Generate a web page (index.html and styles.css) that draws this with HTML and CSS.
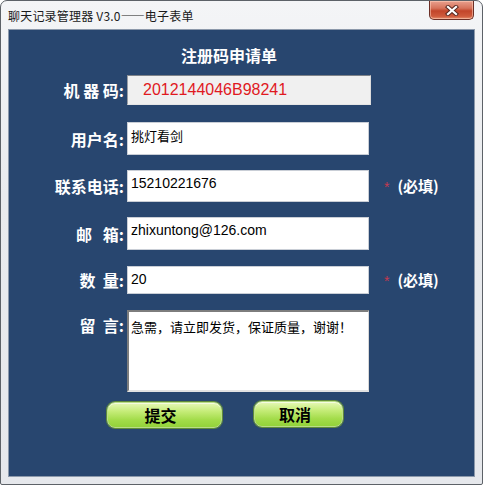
FILE: index.html
```html
<!DOCTYPE html>
<html lang="zh-CN">
<head>
<meta charset="utf-8">
<title>聊天记录管理器 V3.0——电子表单</title>
<link rel="stylesheet" href="styles.css">
</head>
<body>
<div class="window">
  <div class="titlebar">
    <span class="title">聊天记录管理器 V3.0——电子表单</span>
    <div class="close">
      <svg width="14" height="11" viewBox="0 0 14 11">
        <path d="M3 2 L11 9 M11 2 L3 9" stroke="#5a2a22" stroke-width="4.2" stroke-linecap="square" fill="none"/>
        <path d="M3 2 L11 9 M11 2 L3 9" stroke="#ffffff" stroke-width="2.2" stroke-linecap="square" fill="none"/>
      </svg>
    </div>
  </div>
  <div class="panel">
    <div class="heading">注册码申请单</div>

    <div class="row r1">
      <div class="label">机&nbsp;器&nbsp;码:</div>
      <div class="field code">2012144046B98241</div>
    </div>

    <div class="row r2">
      <div class="label">用户名:</div>
      <div class="field cjk h33">挑灯看剑</div>
    </div>

    <div class="row r3">
      <div class="label">联系电话:</div>
      <div class="field h32">15210221676</div>
      <div class="note"><span class="star">*</span><span class="req">(必填)</span></div>
    </div>

    <div class="row r4">
      <div class="label">邮&nbsp;&nbsp;&nbsp;箱:</div>
      <div class="field h33">zhixuntong@126.com</div>
    </div>

    <div class="row r5">
      <div class="label">数&nbsp;&nbsp;量:</div>
      <div class="field h28">20</div>
      <div class="note"><span class="star">*</span><span class="req">(必填)</span></div>
    </div>

    <div class="row r6">
      <div class="label top">留&nbsp;&nbsp;言:</div>
      <div class="field memo">急需，请立即发货，保证质量，谢谢！</div>
    </div>

    <div class="buttons">
      <div class="btn submit">提交</div>
      <div class="btn cancel">取消</div>
    </div>
  </div>
</div>
</body>
</html>
```

FILE: styles.css
```css
html, body {
  margin: 0;
  padding: 0;
  background: #ffffff;
}

body {
  font-family: "Noto Sans CJK SC", "Liberation Sans", sans-serif;
}

.window {
  box-sizing: border-box;
  width: 483px;
  height: 485px;
  border: 1px solid #5d6268;
  border-radius: 7px 7px 2px 2px;
  background: linear-gradient(#f4f5f7, #e9ebee 40%, #e6e8ec);
  display: flex;
  flex-direction: column;
  overflow: hidden;
}

.titlebar {
  height: 28px;
  display: flex;
  justify-content: space-between;
  align-items: flex-start;
  padding: 0 8px 0 7px;
}

.title {
  margin-top: 7px;
  font-size: 12px;
  line-height: 16px;
  color: #1a1a1a;
  font-family: "Noto Sans CJK SC", sans-serif;
  letter-spacing: 0.2px;
}

.close {
  width: 45px;
  height: 19px;
  box-sizing: border-box;
  border: 1px solid #6b2f26;
  border-top: none;
  border-radius: 0 0 5px 5px;
  background: linear-gradient(#e9a08e 0%, #d6735b 40%, #c2452a 55%, #cf5a3c 85%, #e6906f 100%);
  box-shadow: inset 0 0 0 1px rgba(255, 210, 190, 0.55);
  display: flex;
  align-items: center;
  justify-content: center;
}

.panel {
  box-sizing: border-box;
  width: 467px;
  height: 448px;
  margin-left: 7px;
  border: 1px solid #8c99ab;
  background: #28466f;
  display: flex;
  flex-direction: column;
}

.heading {
  margin-top: 15px;
  padding-left: 172px;
  font-size: 16px;
  line-height: 20px;
  font-weight: bold;
  color: #ffffff;
}

.row {
  display: flex;
  align-items: center;
}

.r1 { margin-top: 10px; }
.r2 { margin-top: 17px; }
.r3 { margin-top: 15px; }
.r4 { margin-top: 15px; }
.r5 { margin-top: 16px; }
.r6 { margin-top: 16px; align-items: flex-start; }

.label {
  width: 115px;
  margin-right: 3px;
  text-align: right;
  font-size: 16px;
  line-height: 20px;
  font-weight: bold;
  color: #ffffff;
  white-space: nowrap;
}

.label.top {
  margin-top: 5px;
}

.field {
  box-sizing: border-box;
  width: 242px;
  background: #ffffff;
  border: 1px solid #c9ced6;
  padding: 3px 3px;
  font-family: "Liberation Sans", "Noto Sans CJK SC", sans-serif;
  font-size: 14px;
  line-height: 18px;
  color: #000000;
  white-space: nowrap;
}

.field.cjk {
  font-family: "Noto Sans CJK SC", sans-serif;
  font-size: 13px;
  padding-top: 4px;
}

.h33 { height: 33px; }
.h32 { height: 32px; }
.h28 { height: 28px; }

.field.code {
  width: 244px;
  height: 30px;
  background: #f0f0f0;
  border-top: 1px solid #7f8389;
  border-left: 1px solid #9a9ea4;
  border-right: 1px solid #dcdcdc;
  border-bottom: 1px solid #e6e6e6;
  padding: 0 0 0 15px;
  display: flex;
  align-items: center;
  font-size: 16px;
  color: #e0191f;
}

.field.memo {
  height: 82px;
  border-top: 2px solid #7d7d7d;
  border-left: 2px solid #7d7d7d;
  border-right: 1px solid #d8d8d8;
  border-bottom: 2px solid #e2e2e2;
  padding: 6px 2px;
  font-family: "Noto Sans CJK SC", sans-serif;
  font-size: 13px;
  line-height: 18px;
}

.note {
  margin-left: 15px;
  display: flex;
  align-items: center;
}

.star {
  color: #c4394f;
  font-family: "Liberation Sans", sans-serif;
  font-size: 14px;
  line-height: 14px;
  margin-right: 8px;
  margin-top: 2px;
}

.req {
  color: #ffffff;
  font-weight: bold;
  font-size: 15px;
  line-height: 20px;
}

.buttons {
  margin-top: 9px;
  padding-left: 98px;
  display: flex;
  align-items: flex-start;
}

.btn {
  box-sizing: border-box;
  height: 26px;
  border: 1px solid #b9dd86;
  border-radius: 8px;
  background: linear-gradient(#e6f8b8 0%, #c5ec78 35%, #a3dc4a 70%, #93d23a 100%);
  box-shadow: 0 0 0 1px #5f8a3a, inset 0 1px 0 rgba(255, 255, 255, 0.6);
  font-size: 16px;
  line-height: 24px;
  font-weight: bold;
  color: #000000;
  text-align: center;
}

.btn.submit {
  width: 115px;
  margin-top: 1px;
  padding-right: 8px;
}

.btn.cancel {
  width: 89px;
  margin-left: 32px;
  padding-right: 7px;
}
```
